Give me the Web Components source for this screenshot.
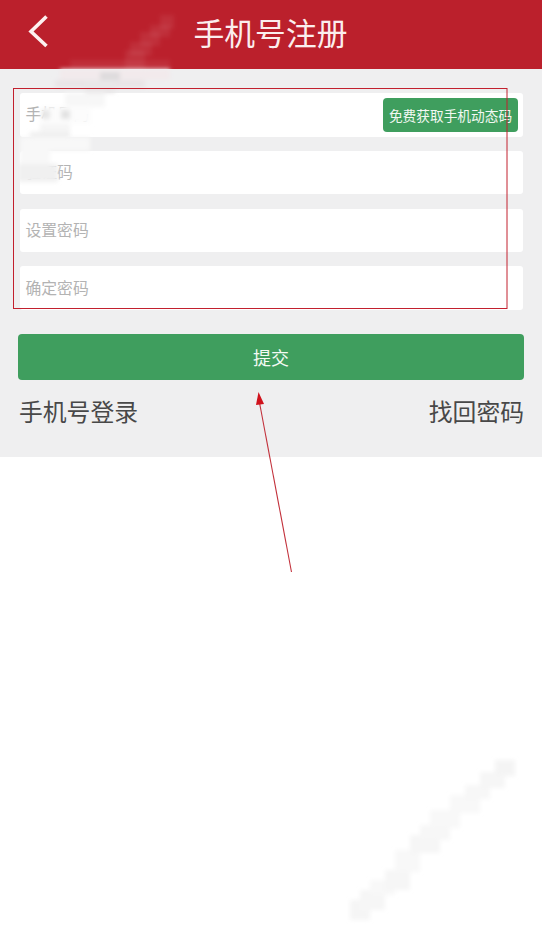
<!DOCTYPE html>
<html lang="zh">
<head>
<meta charset="utf-8">
<title>手机号注册</title>
<style>
  html, body { margin: 0; padding: 0; background: #fff; }
  body { font-family: "Noto Sans CJK SC", "Liberation Sans", sans-serif; position: relative; height: 940px; overflow: hidden; }
</style>
</head>
<body>
<register-page>
  <app-header slot="header">手机号注册</app-header>
  <form-field placeholder="手机号码"><send-code>免费获取手机动态码</send-code></form-field>
  <form-field placeholder="验证码"></form-field>
  <form-field placeholder="设置密码"></form-field>
  <form-field placeholder="确定密码"></form-field>
  <submit-button slot="submit">提交</submit-button>
  <a slot="left">手机号登录</a>
  <a slot="right">找回密码</a>
</register-page>
<mosaic-mark></mosaic-mark>
<red-note></red-note>

<script>
class RegisterPage extends HTMLElement {
  constructor() {
    super();
    this.attachShadow({ mode: 'open' }).innerHTML = `
      <style>
        :host { display: block; }
        .panel { background: #efeff0; height: 388px; box-sizing: border-box; padding: 24px 18px 0 20px; display: flex; flex-direction: column; }
        .fields { display: flex; flex-direction: column; gap: 14.3px; margin-right: 1px; }
        .submit { margin: 24px 0 0 -2px; }
        .links { display: flex; justify-content: space-between; margin: 15px 0 0 -1px; font-size: 23.8px; line-height: 32px; color: #484848; }
      </style>
      <slot name="header"></slot>
      <div class="panel">
        <div class="fields"><slot></slot></div>
        <div class="submit"><slot name="submit"></slot></div>
        <div class="links"><slot name="left"></slot><slot name="right"></slot></div>
      </div>`;
  }
}
customElements.define('register-page', RegisterPage);

class AppHeader extends HTMLElement {
  constructor() {
    super();
    this.attachShadow({ mode: 'open' }).innerHTML = `
      <style>
        :host { display: flex; align-items: center; justify-content: center; height: 69px; background: #bb202c; color: #fbeeee; font-size: 30.8px; position: relative; }
        svg { position: absolute; left: 28px; top: 15px; }
        .t { margin-top: -7px; margin-left: -1px; }
      </style>
      <svg width="22" height="33" viewBox="0 0 22 33" fill="none" stroke="#fdf1f0" stroke-width="3.6">
        <path d="M18.5 1.5 L3 16.5 L18.5 31"/>
      </svg>
      <span class="t"><slot></slot></span>`;
  }
}
customElements.define('app-header', AppHeader);

class FormField extends HTMLElement {
  constructor() {
    super();
    this.attachShadow({ mode: 'open' }).innerHTML = `
      <style>
        :host { display: flex; align-items: center; justify-content: space-between; height: 43.5px; background: #fff; border-radius: 3px; box-sizing: border-box; padding: 0 5px 0 5.5px; font-size: 15.8px; color: #b3b3b3; }
        .ph { margin-top: -2px; }
      </style>
      <span class="ph"></span><slot></slot>`;
  }
  connectedCallback() {
    this.shadowRoot.querySelector('.ph').textContent = this.getAttribute('placeholder');
  }
}
customElements.define('form-field', FormField);

class SendCode extends HTMLElement {
  constructor() {
    super();
    this.attachShadow({ mode: 'open' }).innerHTML = `
      <style>
        :host { display: flex; align-items: center; justify-content: center; width: 135px; height: 34px; border-radius: 4px; background: #3f9e5e; color: #f2f8f2; font-size: 13.7px; white-space: nowrap; }
      </style>
      <slot></slot>`;
  }
}
customElements.define('send-code', SendCode);

class SubmitButton extends HTMLElement {
  constructor() {
    super();
    this.attachShadow({ mode: 'open' }).innerHTML = `
      <style>
        :host { display: flex; align-items: center; justify-content: center; height: 46px; border-radius: 4px; background: #3f9e5e; color: #f4faf4; font-size: 18px; }
      </style>
      <slot></slot>`;
  }
}
customElements.define('submit-button', SubmitButton);

// pixelated watermark smears lying over the page
class MosaicMark extends HTMLElement {
  constructor() {
    super();
    const cell = (x, y, w, h, c) => `<rect x="${x}" y="${y}" width="${w}" height="${h}" fill="${c}"/>`;
    const red = 'rgba(255,235,235,.07)';
    const top = [
      [160,15,14,14,red],[150,25,20,12,red],[140,32,20,14,red],[130,42,22,14,red],[125,50,20,19,red],[70,60,100,9,red],
      [60,69,110,11,'#f2eaec'],[100,72,20,14,'#dedbdd'],[55,80,90,8,'#e9e5e7'],[85,80,30,13,'#e9e7e8'],
      [65,93,40,14,'#f7f7f7'],[60,107,30,16,'#fafafa'],[41,106,50,18,'#fcfcfc'],
      [42,110,8,9,'#e6e6e6'],[61,110,9,9,'#e2e2e2'],
      [40,124,30,8,'#f5f5f5'],[30,132,40,8,'#efefef'],[20,137,70,14,'#f8f8f8'],[20,151,30,14,'#f8f8f8'],
      [18,164,40,18,'#f0f0f0']
    ];
    const bottom = [
      [350,900,20,20,'#f5f5f5'],[360,890,25,20,'#f6f6f6'],[370,880,25,15,'#f8f8f8'],[385,870,25,20,'#f6f6f6'],
      [395,850,25,22,'#f8f8f8'],[410,835,30,18,'#f6f6f6'],[420,825,30,15,'#f7f7f7'],[430,810,30,18,'#f8f8f8'],
      [450,795,30,18,'#f8f8f8'],[465,785,25,14,'#f7f7f7'],[480,772,25,16,'#f6f6f6'],[495,760,20,16,'#f4f4f4']
    ];
    this.attachShadow({ mode: 'open' }).innerHTML = `
      <style>
        :host { position: absolute; left: 0; top: 0; width: 542px; height: 940px; pointer-events: none; }
        svg { display: block; }
      </style>
      <svg width="542" height="940" viewBox="0 0 542 940" shape-rendering="crispEdges">
        <defs><filter id="s" x="-5%" y="-5%" width="110%" height="110%"><feGaussianBlur stdDeviation="2.2"/></filter></defs>
        <g filter="url(#s)">${top.map(c => cell(...c)).join('')}${bottom.map(c => cell(...c)).join('')}</g>
      </svg>`;
  }
}
customElements.define('mosaic-mark', MosaicMark);

// red annotation box and arrow drawn over the screenshot
class RedNote extends HTMLElement {
  constructor() {
    super();
    this.attachShadow({ mode: 'open' }).innerHTML = `
      <style>
        :host { position: absolute; left: 0; top: 0; width: 542px; height: 940px; pointer-events: none; }
        svg { display: block; }
      </style>
      <svg width="542" height="940" viewBox="0 0 542 940" fill="none">
        <rect x="13.5" y="88.5" width="493.5" height="220" stroke="#c2202e" stroke-width="1"/>
        <path d="M291.5 572 L259 400" stroke="#c2303a" stroke-width="1.1"/>
        <path d="M258.5 392 L264 404 L256 405 Z" fill="#d0121c"/>
      </svg>`;
  }
}
customElements.define('red-note', RedNote);
</script>
</body>
</html>
